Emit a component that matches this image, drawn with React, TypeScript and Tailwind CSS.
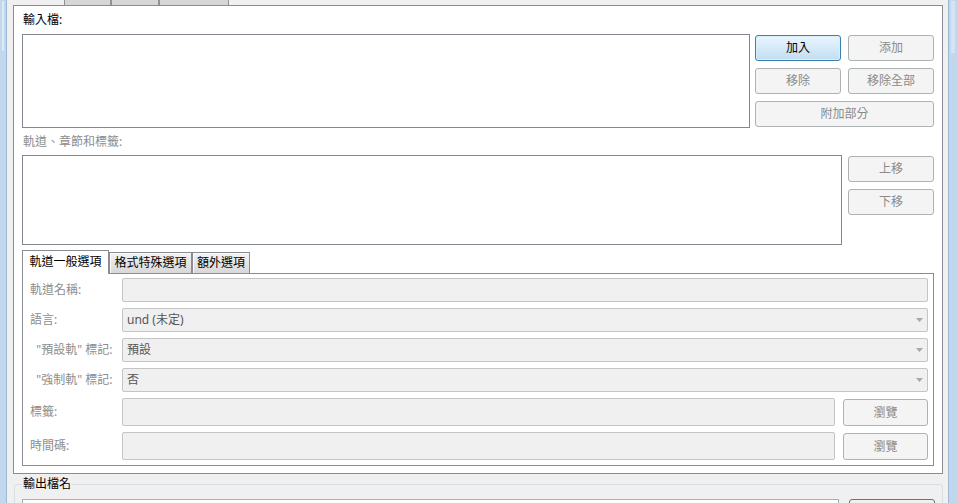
import clsx from "clsx";

const btnBase =
  "flex items-center justify-center rounded-[3px] border text-[12px] leading-none";
const btnOff = "border-[#adb2b5] bg-[#f4f4f4] text-[#8a8a8a]";

function Btn({ label, primary, className }: { label: string; primary?: boolean; className?: string }) {
  return (
    <div
      className={clsx(
        btnBase,
        primary
          ? "border-[#3c7fb1] bg-gradient-to-b from-[#eaf5fd] to-[#c2def2] text-black shadow-[inset_0_0_0_1px_#d9effc]"
          : btnOff,
        className
      )}
    >
      {label}
    </div>
  );
}

function Arrow() {
  return (
    <svg width="7" height="4" viewBox="0 0 7 4" className="shrink-0">
      <path d="M0 0h7L3.5 4z" fill="#a8a8a8" />
    </svg>
  );
}

function Field({ text, combo, className }: { text?: string; combo?: boolean; className?: string }) {
  return (
    <div
      className={clsx(
        "flex h-full items-center justify-between rounded-[2px] border border-[#c4c4c4] bg-[#f0f0f0] pl-[4px] pr-[4px] text-[12px] text-[#555555]",
        className
      )}
    >
      <span>{text}</span>
      {combo && <Arrow />}
    </div>
  );
}

function Row({ label, h, children }: { label: string; h: string; children: React.ReactNode }) {
  return (
    <div className={clsx("flex items-center", h)}>
      <div className="w-[99px] shrink-0 whitespace-pre pl-[7px] text-[12px] text-[#8d8d8d]">{label}</div>
      <div className="flex h-full flex-1 gap-[8px]">{children}</div>
    </div>
  );
}

export default function App() {
  return (
    <div className="flex h-[503px] w-[957px] overflow-hidden bg-[#f0f0f0] font-['Noto_Sans','Noto_Sans_CJK_TC',sans-serif]">
      {/* left window frame */}
      <div className="flex w-[7px] shrink-0 flex-col border-r border-[#9cb8d5] bg-[#c1d7ee]">
        <div className="mx-[2px] mt-[1px] h-[50px] bg-[#dde9f5]" />
      </div>

      <div className="flex min-w-0 flex-1 flex-col">
        {/* top tab strip (scrolled) */}
        <div className="flex h-[5px] shrink-0 pl-[57px]">
          <div className="w-[47px] border-x border-[#8e9196] bg-[#d6d6d6]" />
          <div className="w-[48px] border-x border-[#8e9196] bg-[#d6d6d6]" />
          <div className="w-[70px] border-x border-[#8e9196] bg-[#d6d6d6]" />
        </div>

        {/* main tab panel */}
        <div className="ml-[6px] mr-[5px] flex h-[469px] shrink-0 flex-col border border-[#898c95] bg-white px-[8px]">
          <div className="flex h-[28px] shrink-0 items-center text-[12px] text-black">
            <span className="pl-[1px]">輸入檔:</span>
          </div>

          <div className="flex h-[94px] shrink-0">
            <div className="w-[728px] border border-[#828790] bg-white" />
            <div className="ml-[5px] grid w-[179px] grid-cols-[86px_86px] content-start gap-x-[7px] gap-y-[7px] pt-[1px]">
              <Btn label="加入" primary className="h-[26px]" />
              <Btn label="添加" className="h-[26px]" />
              <Btn label="移除" className="h-[26px]" />
              <Btn label="移除全部" className="h-[26px]" />
              <Btn label="附加部分" className="col-span-2 h-[26px]" />
            </div>
          </div>

          <div className="flex h-[27px] shrink-0 items-center text-[12px] text-[#8d8d8d]">
            <span className="pl-[1px]">軌道、章節和標籤:</span>
          </div>

          <div className="flex h-[90px] shrink-0">
            <div className="flex-1 border border-[#828790] bg-white" />
            <div className="ml-[6px] flex w-[86px] flex-col gap-[7px] pt-[1px]">
              <Btn label="上移" className="h-[26px]" />
              <Btn label="下移" className="h-[26px]" />
            </div>
          </div>

          <div className="h-[5px] shrink-0" />

          {/* inner tabs */}
          <div className="relative z-10 flex h-[23px] shrink-0 items-end text-[12px] text-black">
            <div className="mb-[-1px] flex h-[24px] w-[87px] items-center justify-center border-x border-t border-[#898c95] bg-white pb-[1px]">
              軌道一般選項
            </div>
            <div className="flex h-[21px] w-[83px] items-center justify-center border-x border-t border-[#898c95] bg-gradient-to-b from-[#f2f2f2] to-[#d8d8d8] shadow-[inset_1px_1px_0_#fbfbfb]">
              格式特殊選項
            </div>
            <div className="flex h-[21px] w-[58px] items-center justify-center border-x border-t border-[#898c95] bg-gradient-to-b from-[#f2f2f2] to-[#d8d8d8] shadow-[inset_1px_1px_0_#fbfbfb]">
              額外選項
            </div>
          </div>

          <div className="flex h-[193px] shrink-0 flex-col gap-[6px] border border-[#898c95] bg-white pb-[5px] pr-[5px] pt-[4px]">
            <Row label="軌道名稱:" h="h-[24px]">
              <Field className="flex-1" />
            </Row>
            <Row label="語言:" h="h-[24px]">
              <Field className="flex-1" text="und (未定)" combo />
            </Row>
            <Row label={'  "預設軌" 標記:'} h="h-[24px]">
              <Field className="flex-1" text="預設" combo />
            </Row>
            <Row label={'  "強制軌" 標記:'} h="h-[24px]">
              <Field className="flex-1" text="否" combo />
            </Row>
            <Row label="標籤:" h="h-[28px]">
              <Field className="flex-1" />
              <Btn label="瀏覽" className="mt-[1px] h-[27px] w-[85px]" />
            </Row>
            <Row label="時間碼:" h="h-[28px]">
              <Field className="flex-1" />
              <Btn label="瀏覽" className="mt-[1px] h-[27px] w-[85px]" />
            </Row>
          </div>
        </div>

        {/* output file name group */}
        <fieldset className="ml-[7px] mr-[5px] mt-[2px] h-[60px] shrink-0 rounded-[3px] border border-[#d5dfe5] pl-[7px] pr-[7px]">
          <legend className="px-[1px] text-[12px] leading-[16px] text-black">輸出檔名</legend>
          <div className="mt-[7px] flex h-[24px] gap-[10px]">
            <div className="flex-1 border border-[#abadb3] bg-white" />
            <div className="w-[86px] rounded-[3px] border border-[#707070] bg-gradient-to-b from-[#f2f2f2] to-[#dddddd]" />
          </div>
        </fieldset>
      </div>

      {/* right window frame */}
      <div className="flex w-[9px] shrink-0 flex-col border-l border-[#9cb8d5] bg-[#c1d7ee]">
        <div className="mx-[2px] mt-[1px] h-[52px] bg-[#d5e4f3]" />
      </div>
    </div>
  );
}
